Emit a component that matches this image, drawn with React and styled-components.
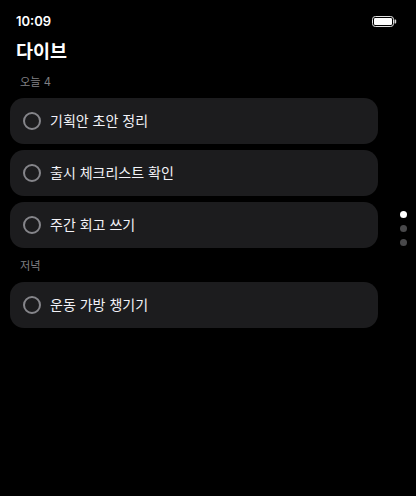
import React from "react";
import styled, { createGlobalStyle } from "styled-components";

const Global = createGlobalStyle`
  html, body { margin: 0; padding: 0; background: #000; }
  body { font-family: Inter, "Noto Sans CJK KR", sans-serif; }
`;

const Screen = styled.div`
  position: relative;
  width: 416px;
  height: 496px;
  background: #000;
  color: #fff;
  overflow: hidden;
`;

const StatusBar = styled.div`
  height: 36px;
  padding: 6px 19px 0 16px;
  display: flex;
  align-items: center;
  justify-content: space-between;
  box-sizing: border-box;
`;

const Time = styled.span`
  font-size: 13px;
  font-weight: 600;
  line-height: 18px;
`;

const Battery = styled.svg`
  display: block;
`;

const Title = styled.h1`
  margin: 0;
  padding: 1px 16px 0;
  font-size: 18.5px;
  line-height: 28px;
  font-weight: 600;
`;

const Section = styled.div`
  padding: 0 38px 0 10px;
`;

const SectionLabel = styled.div`
  padding-left: 10px;
  font-size: 11.2px;
  line-height: 16px;
  color: #808085;
  margin-top: ${p => p.$top}px;
  margin-bottom: ${p => p.$bottom}px;
`;

const List = styled.div`
  display: flex;
  flex-direction: column;
  gap: 6px;
`;

const Row = styled.div`
  height: 46px;
  border-radius: 14px;
  background: #1c1c1e;
  display: flex;
  align-items: center;
  padding-left: 13px;
  gap: 9px;
`;

const Circle = styled.span`
  width: 18px;
  height: 18px;
  box-sizing: border-box;
  border: 2px solid #85858a;
  border-radius: 50%;
  display: block;
  flex: none;
`;

const RowText = styled.span`
  font-size: 14px;
  line-height: 20px;
  color: #f2f2f7;
`;

const Pager = styled.div`
  position: absolute;
  left: 399.5px;
  top: 210.5px;
  display: flex;
  flex-direction: column;
  gap: 7px;
`;

const Dot = styled.span`
  width: 7px;
  height: 7px;
  border-radius: 50%;
  background: ${p => (p.$active ? "#fff" : "#48484a")};
`;

const morning = ["기획안 초안 정리", "출시 체크리스트 확인", "주간 회고 쓰기"];
const evening = ["운동 가방 챙기기"];

const Item = ({ text }) => (
  <Row>
    <Circle />
    <RowText>{text}</RowText>
  </Row>
);

export default function App() {
  return (
    <Screen>
      <Global />
      <StatusBar>
        <Time>10:09</Time>
        <Battery width="25" height="11" viewBox="0 0 25 11">
          <rect x="0.5" y="0.5" width="21" height="10" rx="2.8" fill="none" stroke="#e0e0e0" strokeWidth="1" />
          <rect x="2" y="2" width="18" height="7" rx="1.2" fill="#fff" />
          <path d="M22.5 3.5h.7c.6 0 1 .5 1 1v2c0 .5-.4 1-1 1h-.7z" fill="#d8d8d8" />
        </Battery>
      </StatusBar>
      <Title>다이브</Title>
      <Section>
        <SectionLabel $top={9} $bottom={8}>오늘 4</SectionLabel>
        <List>
          {morning.map(t => <Item key={t} text={t} />)}
        </List>
        <SectionLabel $top={10} $bottom={8}>저녁</SectionLabel>
        <List>
          {evening.map(t => <Item key={t} text={t} />)}
        </List>
      </Section>
      <Pager>
        <Dot $active />
        <Dot />
        <Dot />
      </Pager>
    </Screen>
  );
}
